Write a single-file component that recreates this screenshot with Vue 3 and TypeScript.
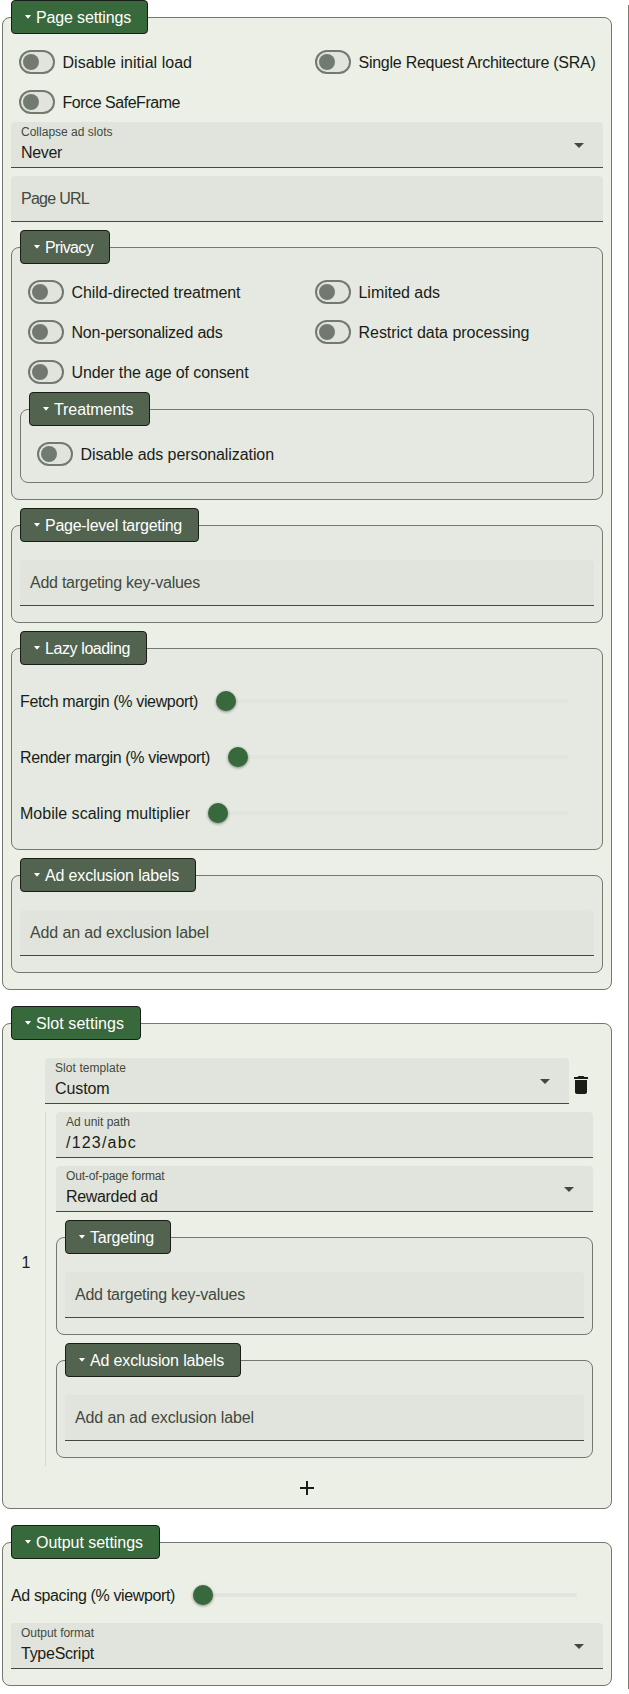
<script setup lang="ts">
import { defineComponent, h, withDirectives, type Directive } from 'vue'

// Tracks a label out (or in) so that it fills the given width.
const vFit: Directive<HTMLElement, number> = {
  mounted(el, { value }) {
    const length = el.textContent?.length ?? 1
    const natural = el.getBoundingClientRect().width
    el.style.letterSpacing = `${(value - natural) / length}px`
  },
}

const widths: Record<string, number> = {
  'Page settings': 95, 'Slot settings': 88, 'Output settings': 107,
  'Disable initial load': 129.5, 'Single Request Architecture (SRA)': 237, 'Force SafeFrame': 117.5,
  'Collapse ad slots': 91.5, Never: 41, 'Page URL': 68,
  Privacy: 48, 'Child-directed treatment': 169, 'Limited ads': 81.5,
  'Non-personalized ads': 151, 'Restrict data processing': 171, 'Under the age of consent': 177,
  Treatments: 79.5, 'Disable ads personalization': 193.5,
  'Page-level targeting': 137, 'Add targeting key-values': 170, 'Lazy loading': 85,
  'Fetch margin (% viewport)': 178, 'Render margin (% viewport)': 190, 'Mobile scaling multiplier': 170,
  'Ad exclusion labels': 134, 'Add an ad exclusion label': 179,
  'Slot template': 71, Custom: 54.5, 'Ad unit path': 64, '/123/abc': 71,
  'Out-of-page format': 98.5, 'Rewarded ad': 91.5, Targeting: 64,
  'Ad spacing (% viewport)': 164, 'Output format': 73, TypeScript: 73,
}

const Txt = defineComponent({
  props: { t: { type: String, required: true } },
  setup: (props) => () =>
    withDirectives(h('span', { class: 'txt' }, props.t), [[vFit, widths[props.t] ?? 0]]),
})

const Group = defineComponent({
  props: { title: { type: String, required: true }, outer: Boolean },
  setup: (props, { slots }) => () =>
    h('fieldset', { class: ['group', { outer: props.outer }] }, [
      h('legend', [
        h('svg', { class: 'caret', viewBox: '0 0 6 4', width: 6, height: 4 }, [
          h('path', { d: 'M.5 0h5q.6 0 .2.6L3.4 3.3q-.4.4-.8 0L.3.6Q-.1 0 .5 0z' }),
        ]),
        h(Txt, { t: props.title }),
      ]),
      slots.default?.(),
    ]),
})

const Field = defineComponent({
  props: { label: { type: String, required: true }, value: String, select: Boolean },
  setup: (props) => () =>
    h('div', { class: ['field', { filled: props.value }] }, [
      h('div', { class: 'label' }, [h(Txt, { t: props.label })]),
      props.value ? h('div', { class: 'value' }, [h(Txt, { t: props.value })]) : null,
      props.select
        ? h('svg', { class: 'arrow', viewBox: '0 0 10 5', width: 10, height: 5 }, [h('path', { d: 'M0 0h10L5 5z' })])
        : null,
    ]),
})

const Toggle = defineComponent({
  props: { label: { type: String, required: true } },
  setup: (props) => () =>
    h('label', { class: 'toggle' }, [h('span', { class: 'switch' }, [h('i')]), h(Txt, { t: props.label })]),
})

const Slider = defineComponent({
  props: { label: { type: String, required: true } },
  setup: (props) => () =>
    h('div', { class: 'slider' }, [h(Txt, { t: props.label }), h('div', { class: 'track' }, [h('i')])]),
})

const pageToggles = ['Disable initial load', 'Single Request Architecture (SRA)', 'Force SafeFrame']
const privacyToggles = [
  'Child-directed treatment', 'Limited ads',
  'Non-personalized ads', 'Restrict data processing',
  'Under the age of consent',
]
const lazySliders = ['Fetch margin (% viewport)', 'Render margin (% viewport)', 'Mobile scaling multiplier']
</script>

<template>
  <div class="page">
    <main class="config">
      <Group title="Page settings" outer>
        <div class="toggles"><Toggle v-for="t in pageToggles" :key="t" :label="t" /></div>
        <Field label="Collapse ad slots" value="Never" select />
        <Field label="Page URL" />
        <Group title="Privacy">
          <div class="toggles"><Toggle v-for="t in privacyToggles" :key="t" :label="t" /></div>
          <Group title="Treatments">
            <div class="toggles"><Toggle label="Disable ads personalization" /></div>
          </Group>
        </Group>
        <Group title="Page-level targeting">
          <Field class="lead" label="Add targeting key-values" />
        </Group>
        <Group title="Lazy loading">
          <Slider v-for="s in lazySliders" :key="s" :label="s" />
        </Group>
        <Group title="Ad exclusion labels">
          <Field class="lead" label="Add an ad exclusion label" />
        </Group>
      </Group>

      <Group title="Slot settings" outer>
        <div class="slot-row lead">
          <div class="index">1</div>
          <div class="slot-body">
            <div class="slot-head">
              <Field label="Slot template" value="Custom" select />
              <svg class="trash" viewBox="0 0 24 24" width="24" height="24">
                <path d="M6 19c0 1.1.9 2 2 2h8c1.1 0 2-.9 2-2V7H6v12zM19 4h-3.500l-1-1h-5l-1 1H5v2h14V4z" />
              </svg>
            </div>
            <div class="slot-content">
              <Field label="Ad unit path" value="/123/abc" />
              <Field label="Out-of-page format" value="Rewarded ad" select />
              <Group title="Targeting">
                <Field class="lead" label="Add targeting key-values" />
              </Group>
              <Group title="Ad exclusion labels">
                <Field class="lead" label="Add an ad exclusion label" />
              </Group>
            </div>
          </div>
        </div>
        <div class="add">
          <svg viewBox="0 0 24 24" width="24" height="24"><path d="M19 13h-6v6h-2v-6H5v-2h6V5h2v6h6v2z" /></svg>
        </div>
      </Group>

      <Group title="Output settings" outer>
        <Slider label="Ad spacing (% viewport)" />
        <Field label="Output format" value="TypeScript" select />
      </Group>
    </main>
    <aside class="preview"></aside>
  </div>
</template>

<style>
html,
body {
  background: #fff;
  overflow: hidden;
}
</style>

<style scoped>
.page {
  display: flex;
  justify-content: space-between;
  height: 1694px;
  color: #191d17;
  font: 16px/21px 'Liberation Sans', Arial, sans-serif;
}
.config {
  width: 614px;
}
.preview {
  width: 1px;
  margin: 5px 0;
  background: #787d76;
}
.page :deep(.txt) {
  display: inline-block;
  white-space: pre;
}
.page :deep(.group) {
  min-width: 0;
  margin: 0 0 8px;
  padding: 8px;
  border: 1px solid #72796f;
  border-radius: 8px;
  background: #e5e9e2;
}
.page :deep(.group.outer) {
  margin: 0 2px 16px;
  background: #ebefe5;
}
.page :deep(legend) {
  box-sizing: border-box;
  display: flex;
  align-items: center;
  height: 34px;
  padding: 1px 15.500px 0 13px;
  border: 1px solid #191d17;
  border-radius: 4px;
  background: #52634f;
  color: #fff;
}
.page :deep(.outer > legend) {
  background: #38693c;
}
.page :deep(.caret) {
  width: 6px;
  height: 4px;
  margin: -1px 5px 0 0;
  fill: #fff;
}
.page :deep(.toggles) {
  display: grid;
  grid-template-columns: 1fr 1fr;
}
.page :deep(.toggle) {
  display: flex;
  align-items: center;
  height: 40px;
  padding-left: 8px;
}
.page :deep(.toggle .txt) {
  margin: 1px 0 0 7.500px;
}
.page :deep(.switch) {
  box-sizing: border-box;
  flex: none;
  width: 36px;
  height: 24px;
  padding: 2px;
  border: 2px solid #72796f;
  border-radius: 12px;
  background: #e1e4dc;
}
.page :deep(.switch i) {
  display: block;
  width: 16px;
  height: 16px;
  border-radius: 50%;
  background: #72796f;
}
.page :deep(.field) {
  position: relative;
  box-sizing: border-box;
  flex: 1;
  height: 46px;
  margin-bottom: 8px;
  padding: 12px 10px 0;
  border-bottom: 1px solid #424940;
  border-radius: 4px 4px 0 0;
  background: #e1e4dc;
}
.page :deep(.label) {
  color: #424940;
}
.page :deep(.filled) {
  padding-top: 3px;
}
.page :deep(.filled .label) {
  height: 14px;
  font-size: 12px;
  line-height: 14px;
}
.page :deep(.value) {
  margin-top: 3px;
}
.page :deep(.arrow) {
  position: absolute;
  top: 21px;
  right: 19px;
  fill: #424940;
}
.page :deep(.lead) {
  margin-top: 10px;
}
.page :deep(.slider) {
  display: flex;
  align-items: center;
  height: 56px;
}
.page :deep(.slider .txt) {
  margin-top: 1px;
}
.page :deep(.track) {
  display: flex;
  align-items: center;
  flex: 1;
  height: 4px;
  margin: 0 26px 0 28px;
  border-radius: 2px;
  background: #e1e4dc;
}
.page :deep(.track i) {
  width: 20px;
  height: 20px;
  margin-left: -10px;
  border-radius: 50%;
  background: #38693c;
  box-shadow: 0 1px 3px rgba(0, 0, 0, 0.45);
}
.slot-row {
  display: flex;
}
.index {
  display: flex;
  align-items: center;
  justify-content: center;
  width: 30px;
  margin-right: 4px;
  padding-top: 1px;
}
.slot-body {
  flex: 1;
}
.slot-head {
  display: flex;
  padding-right: 10px;
}
.trash {
  margin-top: 15px;
  fill: #191d17;
}
.slot-content {
  display: flow-root;
  padding: 0 10px;
  border-left: 1px solid #d6dad1;
}
.add {
  display: flex;
  justify-content: center;
  padding-top: 10px;
  fill: #191d17;
}
</style>
